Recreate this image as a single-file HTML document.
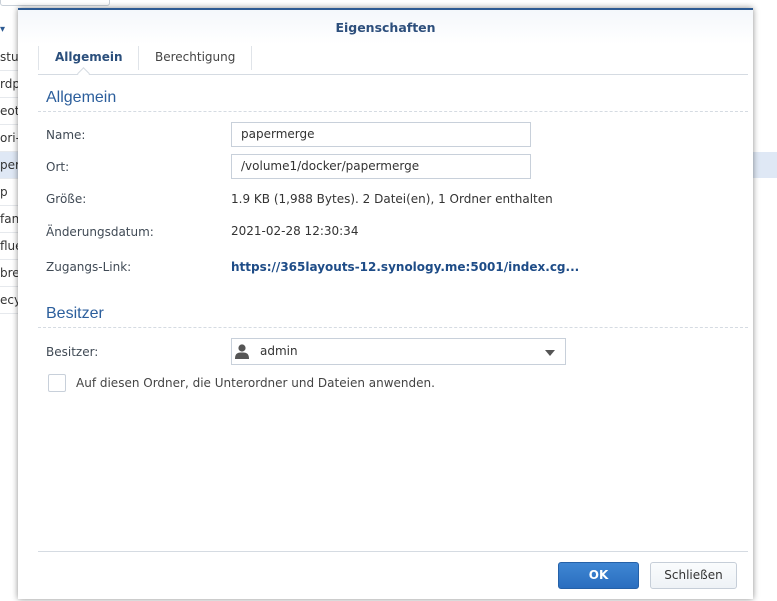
<!DOCTYPE html>
<html><head><style>
body{margin:0;width:777px;height:601px;overflow:hidden;background:#fff;font-family:"DejaVu Sans",Verdana,sans-serif;font-size:12px;color:#404a55;position:relative}
.row{position:absolute;left:0;width:40px;height:26px;border-bottom:1px solid #e6e9ed;font-size:12px;line-height:26px;color:#333;overflow:hidden;white-space:nowrap}
.dlg{position:absolute;left:18px;top:8px;width:735px;height:589px;background:#fff;border-top:2px solid #2d5a92;box-shadow:0 0 6px rgba(0,0,0,.45)}
.hdr{height:34px;background:linear-gradient(#f4f7fb,#fff);text-align:center;line-height:36px;font-weight:bold;color:#2d4f7c;font-size:12.5px}
.abs{position:absolute;white-space:nowrap}
.lbl{position:absolute;left:28px}
.inp{position:absolute;left:213px;width:300px;height:25px;border:1px solid #c8d0da;box-sizing:border-box;line-height:23px;padding-left:9px;color:#333}
.sec{position:absolute;left:28px;color:#2b5e9c;font-family:"Liberation Sans",sans-serif;font-size:16px}
.dash{position:absolute;left:20px;width:710px;border-top:1px dashed #d5dbe2}
</style></head><body>
<div class="abs" style="left:0;top:-6px;width:108px;height:10px;border:1px solid #c9d0d8;border-radius:3px"></div>
<div class="abs" style="left:0;top:24px;font-size:10px;color:#2d5a92">▾</div>
<div class="row" style="top:44px">stub</div>
<div class="row" style="top:71px">rdpr</div>
<div class="row" style="top:98px">eoth</div>
<div class="row" style="top:125px">ori-</div>
<div class="row" style="top:152px;background:#dfe8f5">perm</div>
<div class="row" style="top:179px">p</div>
<div class="row" style="top:206px">fan</div>
<div class="row" style="top:233px">flue</div>
<div class="row" style="top:260px">bre</div>
<div class="row" style="top:287px">ecyc</div>
<div class="abs" style="left:753px;top:152px;width:24px;height:26px;background:#dfe8f5"></div>
<div class="dlg">
<div class="hdr">Eigenschaften</div>
<div class="abs" style="left:20px;top:34px;width:710px;height:30px;border-bottom:1px solid #d5dbe2"></div>
<div class="abs" style="left:20px;top:36px;height:24px;border-left:1px solid #e0e4e9"></div>
<div class="abs" style="left:37px;top:40px;font-weight:bold;color:#2b4f7c;font-size:12px">Allgemein</div>
<div class="abs" style="left:120px;top:36px;height:24px;border-left:1px solid #e0e4e9"></div>
<div class="abs" style="left:137px;top:40px;color:#444;font-size:12px">Berechtigung</div>
<div class="abs" style="left:233px;top:36px;height:24px;border-left:1px solid #e0e4e9"></div>
<div class="abs" style="left:61px;top:59px;width:8px;height:8px;background:#fff;border-left:1px solid #d5dbe2;border-top:1px solid #d5dbe2;transform:rotate(45deg)"></div>
<div class="sec" style="top:79px">Allgemein</div>
<div class="dash" style="top:101px"></div>
<div class="lbl" style="top:118px">Name:</div>
<div class="inp" style="top:112px">papermerge</div>
<div class="lbl" style="top:150px">Ort:</div>
<div class="inp" style="top:144px">/volume1/docker/papermerge</div>
<div class="lbl" style="top:182px">Größe:</div>
<div class="abs" style="left:213px;top:182px;color:#333">1.9 KB (1,988 Bytes). 2 Datei(en), 1 Ordner enthalten</div>
<div class="lbl" style="top:215px">Änderungsdatum:</div>
<div class="abs" style="left:213px;top:214px;color:#333">2021-02-28 12:30:34</div>
<div class="lbl" style="top:250px">Zugangs-Link:</div>
<div class="abs" style="left:213px;top:250px;color:#1e4c87;font-weight:bold;font-size:12px">https://365layouts-12.synology.me:5001/index.cg...</div>
<div class="sec" style="top:295px">Besitzer</div>
<div class="dash" style="top:317px"></div>
<div class="lbl" style="top:335px">Besitzer:</div>
<div class="inp" style="top:328px;width:335px;height:27px;padding-left:28px;line-height:25px">admin</div>
<svg class="abs" style="left:216px;top:333px" width="16" height="16" viewBox="0 0 16 16"><circle cx="8" cy="5" r="3.6" fill="#555"/><path d="M1 16 C1 10 4 9.5 8 9.5 C12 9.5 15 10 15 16Z" fill="#555"/></svg>
<div class="abs" style="left:527px;top:340px;width:0;height:0;border-left:5px solid transparent;border-right:5px solid transparent;border-top:6px solid #555"></div>
<div class="abs" style="left:30px;top:364px;width:16px;height:16px;border:1px solid #c8d0da;border-radius:2px"></div>
<div class="abs" style="left:58px;top:366px;color:#444">Auf diesen Ordner, die Unterordner und Dateien anwenden.</div>
<div class="abs" style="left:20px;top:541px;width:710px;border-top:1px solid #d5dbe2"></div>
<div class="abs" style="left:540px;top:552px;width:81px;height:27px;background:linear-gradient(#3f86d3,#2a6ebf);border:1px solid #2561a8;box-sizing:border-box;border-radius:3px;color:#fff;font-weight:bold;text-align:center;line-height:25px">OK</div>
<div class="abs" style="left:632px;top:552px;width:87px;height:27px;background:linear-gradient(#fafcfd,#eef2f6);border:1px solid #c6ced8;box-sizing:border-box;border-radius:3px;color:#333;text-align:center;line-height:25px">Schließen</div>
</div>
</body></html>
